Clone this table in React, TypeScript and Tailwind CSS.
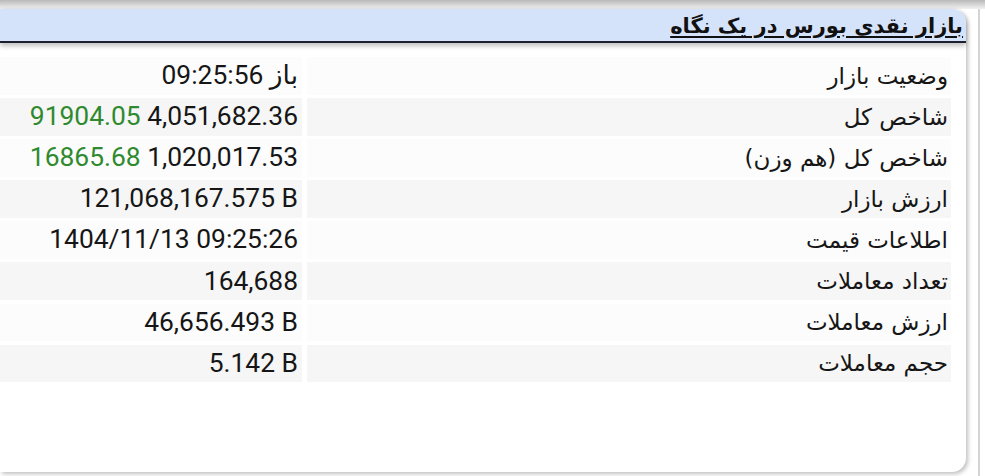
import React from "react";

const rows: { label: string; value: React.ReactNode }[] = [
  { label: "وضعیت بازار", value: <span dir="rtl">باز 09:25:56</span> },
  {
    label: "شاخص کل",
    value: (
      <span>
        <span className="text-[#2f8a2f]">91904.05</span> 4,051,682.36
      </span>
    ),
  },
  {
    label: "شاخص کل (هم وزن)",
    value: (
      <span>
        <span className="text-[#2f8a2f]">16865.68</span> 1,020,017.53
      </span>
    ),
  },
  { label: "ارزش بازار", value: "121,068,167.575 B" },
  { label: "اطلاعات قیمت", value: "1404/11/13 09:25:26" },
  { label: "تعداد معاملات", value: "164,688" },
  { label: "ارزش معاملات", value: "46,656.493 B" },
  { label: "حجم معاملات", value: "5.142 B" },
];

export default function App() {
  return (
    <div className="w-[985px] h-[476px] bg-white overflow-hidden flex flex-col">
      <div className="h-[9px] shrink-0 bg-gradient-to-b from-[#b9b9b9] to-[#f2f2f2]" />
      <div className="flex flex-1 min-h-0">
        <div className="w-[966px] h-[463px] bg-white rounded-br-[14px] rounded-tr-[14px] shadow-[2px_2px_4px_rgba(0,0,0,0.25)] flex flex-col">
          <div
            dir="rtl"
            className="h-[34px] shrink-0 bg-[#d5e3fa] rounded-tr-[14px] border-b-[2px] border-[#1c1f2e] shadow-[0_3px_5px_rgba(0,0,0,0.25)] flex items-center pr-[3px]"
          >
            <span
              className="text-[21px] font-bold underline underline-offset-[3px] text-[#111] leading-none pt-[3px]"
              style={{ fontFamily: "'DejaVu Sans', Tahoma, sans-serif" }}
            >
              بازار نقدی بورس در یک نگاه
            </span>
          </div>
          <div className="flex flex-col gap-[3.3px] pt-[14px] pr-[15px]">
            {rows.map((r, i) => (
              <div key={i} className="flex h-[37.8px] gap-[5px]">
                <div
                  className={`w-[302px] flex items-center justify-end pr-[4px] text-[26.4px] text-[#161616] ${
                    i % 2 === 1 ? "bg-[#f6f6f6]" : "bg-[#fcfcfc]"
                  }`}
                  style={{ fontFamily: "Roboto, 'DejaVu Sans', sans-serif" }}
                >
                  {r.value}
                </div>
                <div
                  dir="rtl"
                  className={`flex-1 flex items-center pr-[3px] text-[23px] text-[#161616] ${
                    i % 2 === 1 ? "bg-[#f6f6f6]" : "bg-[#fcfcfc]"
                  }`}
                  style={{ fontFamily: "'DejaVu Sans', Tahoma, sans-serif" }}
                >
                  {r.label}
                </div>
              </div>
            ))}
          </div>
        </div>
        <div className="flex-1 flex justify-start pl-[12px]">
          <div className="w-[2px] h-full bg-[#d4d4d4]" />
        </div>
      </div>
    </div>
  );
}
